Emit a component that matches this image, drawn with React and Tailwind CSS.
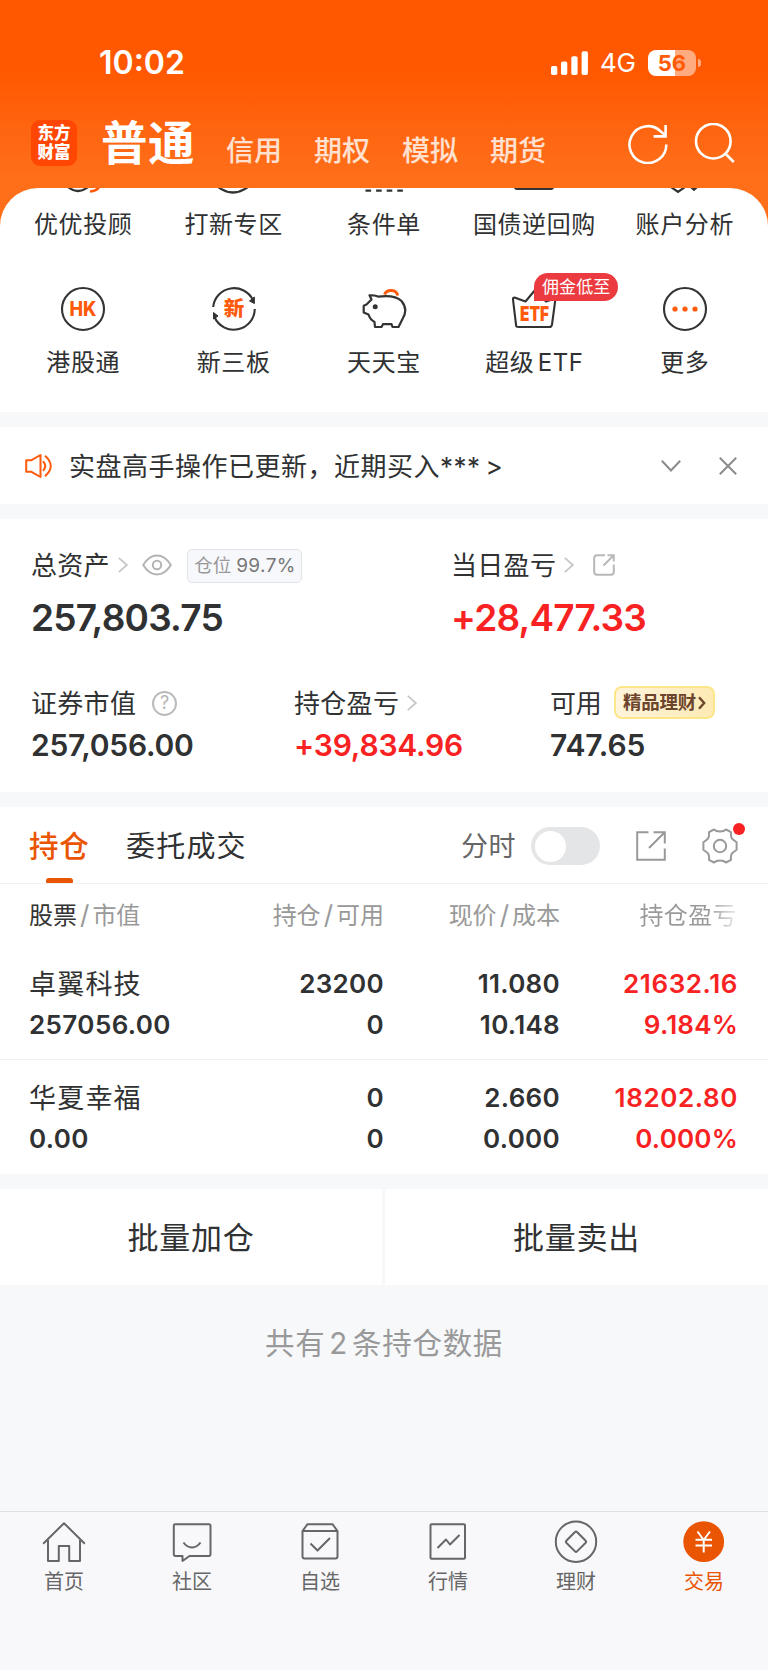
const shortcutsTop = ["优优投顾", "打新专区", "条件单", "国债逆回购", "账户分析"];

const holdings = [
  {
    name: "卓翼科技",
    value: "257056.00",
    amount: "23200",
    available: "0",
    price: "11.080",
    cost: "10.148",
    profit: "21632.16",
    percent: "9.184%",
  },
  {
    name: "华夏幸福",
    value: "0.00",
    amount: "0",
    available: "0",
    price: "2.660",
    cost: "0.000",
    profit: "18202.80",
    percent: "0.000%",
  },
];

const StatusBar = () => (
  <div className="flex h-[38px] items-center pl-[99px]">
    <span className="w-[452px] text-[32px] leading-[38px] font-semibold">10:02</span>
    <svg width="38" height="24" viewBox="0 0 38 24" fill="#fff">
      <rect x="0" y="15" width="6.3" height="9" rx="1.8" />
      <rect x="10" y="10.6" width="6.3" height="13.4" rx="1.8" />
      <rect x="20.3" y="5.3" width="6.3" height="18.7" rx="1.8" />
      <rect x="30.6" y="0.3" width="6.3" height="23.7" rx="1.8" />
    </svg>
    <span className="ml-[11px] w-[48px] pt-[1px] text-[26px] leading-[38px] tracking-[-0.2px]">4G</span>
    <div className="flex h-[26px] w-[48px] items-center justify-center rounded-[8px] bg-linear-to-r from-white from-56% to-white/50 to-56% text-[22px] leading-[26px] font-bold text-[#ff5a05]">
      56
    </div>
    <div className="ml-[2px] h-[8px] w-[3px] rounded-r-full bg-white/50" />
  </div>
);

const Header = () => (
  <header className="h-[240px] bg-linear-to-b from-[#ff5800] from-30% to-[#ff6f1a] to-75% pt-[43.5px] text-white">
    <StatusBar />
    <div className="flex pt-[38.5px] pl-[31px]">
      <div className="h-[46px] w-[46px] rounded-[9px] bg-[#ff4602] pt-[4px] text-center text-[16.5px] leading-[19.3px] font-black">
        <div>东方</div>
        <div>财富</div>
      </div>
      <h1 className="ml-[24px] w-[125px] text-[46.5px] leading-[46px] font-bold tracking-[0.5px]">普通</h1>
      <nav className="flex w-[402px] gap-[32px] pt-[8px] text-[28px] leading-[46px] font-medium text-white/80">
        <span>信用</span>
        <span>期权</span>
        <span>模拟</span>
        <span>期货</span>
      </nav>
      <svg width="40" height="40" viewBox="0 0 40 40" className="mt-[4px]" fill="none" stroke="#fff" strokeWidth="2.6">
        <path d="M38.3 20.5A18.4 18.4 0 1 1 32.5 7.2L37 11" />
        <path d="M37.6 1V12.4H25.6" />
      </svg>
      <svg width="42" height="42" viewBox="0 0 42 42" className="mt-[3px] ml-[26px]" fill="none" stroke="#fff" strokeWidth="2.6">
        <circle cx="19.3" cy="18.2" r="17.3" />
        <path d="M31.3 30.5L39.8 39" />
      </svg>
    </div>
  </header>
);

// lower edges of the row that is scrolled under the header
const CutIcons = () => (
  <svg width="768" height="8" viewBox="0 0 768 8" fill="none" stroke="#333" strokeWidth="2.2" className="block">
    <path d="M68 -1Q78 7 88 -1" />
    <path d="M90 3.5Q97 3 99 -1" stroke="#ff5a0a" strokeWidth="2.6" />
    <path d="M218 -1Q233 10 248 -1" />
    <path d="M365.5 2.6H403.5" strokeDasharray="5.6 5" strokeWidth="2.4" />
    <path d="M515 -1Q515 1 518 1H550Q553 1 553 -1" />
    <path d="M671 -1L678 4L685 -1M691 -1L694 1.8L697 -1" />
  </svg>
);

const HkIcon = () => (
  <svg width="46" height="46" viewBox="0 0 46 46" fill="none" stroke="#333" strokeWidth="2.1">
    <circle cx="23" cy="23" r="21" />
    <text x="23" y="29.8" textAnchor="middle" fill="#ff5a0a" stroke="none" fontSize="19.5" fontWeight="800" letterSpacing="0" textLength="27" lengthAdjust="spacingAndGlyphs">HK</text>
  </svg>
);

const XinIcon = () => (
  <svg width="46" height="46" viewBox="0 0 46 46" fill="none" stroke="#333" strokeWidth="2.1">
    <path d="M2.2 21A21 21 0 0 1 42 14" />
    <path d="M43.8 23A21 21 0 0 1 3.5 31" />
    <path d="M43.4 11V17.5L38.5 15Z" fill="#333" strokeWidth="1" />
    <path d="M2.5 33V26.5L7 30Z" fill="#333" strokeWidth="1" />
    <text x="23" y="30" textAnchor="middle" fill="#ff5a0a" stroke="none" fontSize="20.5" fontWeight="800" letterSpacing="0">新</text>
  </svg>
);

const PigIcon = () => (
  <svg width="46" height="46" viewBox="0 0 46 46" fill="none" stroke="#333" strokeWidth="2.2" strokeLinejoin="round">
    <path d="M23.5 8.5A7 6.5 0 0 1 36.8 9.5" stroke="#ff5a0a" strokeWidth="3" />
    <path d="M8.5 9.3Q13 9 17 10.6Q34 8.5 40.5 15Q47.5 23.5 41.5 33L37.5 41H31.5L30.5 38.2H22L20.5 41H14L13.5 36Q9 33.5 7.5 28.5L2.7 26.5V19.8L5.5 18.5L10.5 13.5Z" />
    <circle cx="14.2" cy="20.7" r="2.5" fill="#333" stroke="none" />
  </svg>
);

const EtfIcon = () => (
  <svg width="46" height="46" viewBox="0 0 46 46" fill="none" stroke="#333" strokeWidth="2.1" strokeLinejoin="round">
    <path d="M5.5 40.5Q6 41 8 41H38.5Q40.5 41 41 38.5L44.5 12.5L35 15.5L24.5 3.5L14.5 15.5L3.5 11.5Q1.8 11.5 2 13.5L5 38.5Q5 40 5.5 40.5Z" />
    <text x="23.5" y="34.5" textAnchor="middle" fill="#ff5a0a" stroke="none" fontSize="20.5" fontWeight="900" letterSpacing="0" textLength="29" lengthAdjust="spacingAndGlyphs">ETF</text>
  </svg>
);

const MoreIcon = () => (
  <svg width="46" height="46" viewBox="0 0 46 46" fill="none" stroke="#333" strokeWidth="2.1">
    <circle cx="23" cy="23" r="21" />
    <g fill="#ff5a0a" stroke="none">
      <circle cx="13" cy="23" r="2.6" />
      <circle cx="23" cy="23" r="2.6" />
      <circle cx="33" cy="23" r="2.6" />
    </g>
  </svg>
);

const shortcuts = [
  { label: "港股通", Icon: HkIcon },
  { label: "新三板", Icon: XinIcon },
  { label: "天天宝", Icon: PigIcon },
  { label: "超级 ETF", Icon: EtfIcon, badge: "佣金低至" },
  { label: "更多", Icon: MoreIcon },
];

const Shortcuts = () => (
  <section className="relative -mt-[52px] h-[224px] overflow-hidden rounded-t-[38px] bg-white text-[24px] leading-[34px] tracking-[0.6px]">
    <CutIcons />
    <div className="grid grid-cols-5 px-[8px] pt-[12px] text-center">
      {shortcutsTop.map((label) => (
        <div key={label} className="whitespace-nowrap">{label}</div>
      ))}
    </div>
    <div className="grid grid-cols-5 px-[8px] pt-[44px] text-center">
      {shortcuts.map(({ label, Icon, badge }) => (
        <div key={label} className="relative flex flex-col items-center">
          <Icon />
          {badge && (
            <span className="absolute -top-[13px] left-[75px] h-[28px] w-[84px] rounded-[14px] rounded-bl-none bg-[#ec3b40] text-[17px] leading-[28px] tracking-[0.1px] text-white">
              {badge}
            </span>
          )}
          <span className="mt-[14px] whitespace-nowrap [word-spacing:-4px]">{label}</span>
        </div>
      ))}
    </div>
  </section>
);

const Notice = () => (
  <section className="mt-[15px] flex h-[77px] items-center bg-white pl-[25px]">
    <svg width="28" height="26" viewBox="0 0 28 26" fill="none" stroke="#ff5a0a" strokeWidth="2">
      <path d="M1.2 7.2H6.5L15.5 2V24L6.5 18.8H1.2Z" strokeLinejoin="round" />
      <path d="M18 8.2Q22.5 13 18 17.8M20 2.8Q31.5 13 20 23.2" />
    </svg>
    <span className="ml-[16px] w-[592px] pt-[2px] text-[26px] leading-[38px] tracking-[0.5px] whitespace-pre [word-spacing:-3px]">实盘高手操作已更新，近期买入*** &gt;</span>
    <svg width="20" height="14" viewBox="0 0 20 14" fill="none" stroke="#8c8c8c" strokeWidth="2">
      <path d="M0.8 1.8L10 11.5L19.2 1.8" />
    </svg>
    <svg width="18" height="18" viewBox="0 0 18 18" className="ml-[38px]" fill="none" stroke="#8c8c8c" strokeWidth="2">
      <path d="M0.8 0.8L17.2 17.2M17.2 0.8L0.8 17.2" />
    </svg>
  </section>
);

const Chevron = () => (
  <svg width="10" height="16" viewBox="0 0 10 16" fill="none" stroke="#c8c8c8" strokeWidth="1.8">
    <path d="M0.8 0.8L8.8 8L0.8 15.2" />
  </svg>
);

const Assets = () => (
  <section className="mt-[15px] h-[273px] bg-white pt-[27px] text-[26px] tracking-[0.3px]">
    <div className="flex pl-[31px]">
      <div className="w-[420px]">
        <div className="flex h-[38px] items-center">
          <span className="w-[87px]">总资产</span>
          <Chevron />
          <svg width="30" height="22" viewBox="0 0 30 22" className="ml-[14px]" fill="none" stroke="#b4b4b4" strokeWidth="2">
            <path d="M1.2 11Q7 1.5 15 1.5T28.8 11Q23 20.5 15 20.5T1.2 11Z" />
            <circle cx="15" cy="11" r="4.2" />
          </svg>
          <span className="mt-[1px] ml-[15px] flex h-[34px] w-[115px] items-center justify-center rounded-[5px] border border-[#e2e3e6] bg-[#f7f8fb] pt-[1px] pl-[1px] text-[18.5px] tracking-normal text-[#999]">
            仓位<span className="ml-[5px] text-[19px] tracking-[0.4px] text-[#777]">99.7%</span>
          </span>
        </div>
        <div className="mt-[12px] text-[37px] leading-[44px] font-semibold tracking-[-0.8px]">257,803.75</div>
      </div>
      <div>
        <div className="flex h-[38px] items-center">
          <span className="w-[113px]">当日盈亏</span>
          <Chevron />
          <svg width="22" height="22" viewBox="0 0 22 22" className="ml-[19px]" fill="none" stroke="#b8b8b8" strokeWidth="2">
            <path d="M12 1.2H4Q1.2 1.2 1.2 4V18Q1.2 20.8 4 20.8H18Q20.8 20.8 20.8 18V10.5" />
            <path d="M14.5 1.2H20.8V7.5M20.5 1.5L10.5 11.5" />
          </svg>
        </div>
        <div className="mt-[12px] text-[37px] leading-[44px] font-semibold tracking-[-0.8px] text-[#f82222]">+28,477.33</div>
      </div>
    </div>
    <div className="mt-[44px] flex pl-[31px]">
      <div className="w-[263px]">
        <div className="flex h-[38px] items-center">
          <span className="w-[121px]">证券市值</span>
          <span className="flex h-[25px] w-[25px] items-center justify-center rounded-full border-2 border-[#bbb] text-[18px] leading-none tracking-normal text-[#b4b4b4]">?</span>
        </div>
        <div className="mt-[5px] text-[30px] leading-[36px] font-semibold tracking-[-0.25px]">257,056.00</div>
      </div>
      <div className="w-[256px]">
        <div className="flex h-[38px] items-center">
          <span className="w-[113px]">持仓盈亏</span>
          <Chevron />
        </div>
        <div className="mt-[5px] text-[30px] leading-[36px] font-semibold tracking-[-0.2px] text-[#f82222]">+39,834.96</div>
      </div>
      <div>
        <div className="flex h-[38px] items-center">
          <span className="w-[64px] tracking-[-0.3px]">可用</span>
          <span className="-mt-[1px] flex h-[33px] w-[101px] items-center justify-center rounded-[8px] border-2 border-[#fde68a] bg-linear-to-r from-[#fff4dc] to-[#fdeab4] text-[18.5px] font-bold tracking-[-0.3px] text-[#6d452c]">
            精品理财
            <svg width="8" height="14" viewBox="0 0 8 14" className="ml-[2px]" fill="none" stroke="#6d452c" strokeWidth="2.4">
              <path d="M1 1.2L6.2 7L1 12.8" />
            </svg>
          </span>
        </div>
        <div className="mt-[5px] text-[30px] leading-[36px] font-semibold tracking-[-0.1px]">747.65</div>
      </div>
    </div>
  </section>
);

const HoldingTabs = () => (
  <div className="flex h-[77px] items-center border-b border-[#f0f1f3] pt-[2px] pl-[29px]">
    <div className="relative flex h-full w-[97px] items-center text-[29.5px] font-medium tracking-[0.8px] text-[#ea5504]">
      持仓
      <span className="absolute bottom-0 left-[17px] h-[5px] w-[27px] rounded-t-[3px] rounded-b-[1px] bg-[#ea5504]" />
    </div>
    <span className="w-[335px] pt-[2px] text-[29px] tracking-[1.2px]">委托成交</span>
    <span className="w-[70px] pt-[2px] text-[27px] tracking-[0.4px] text-[#666]">分时</span>
    <div className="flex h-[38px] w-[69px] items-center rounded-full bg-[#e4e5e7] pl-[4px]">
      <div className="h-[31px] w-[31px] rounded-full bg-white" />
    </div>
    <svg width="30" height="30" viewBox="0 0 30 30" className="ml-[36px]" fill="none" stroke="#999" strokeWidth="2">
      <path d="M12.5 1.2H1.2V28.8H28.8V17.5" />
      <path d="M17.5 1.2H28.8V12.5M28.5 1.5L13 17" />
    </svg>
    <div className="relative ml-[36px]">
      <svg width="36" height="36" viewBox="0 0 36 36" fill="none" stroke="#999" strokeWidth="2" strokeLinejoin="round">
        <path d="M12 1.5Q14 3.6 18 3.6T24 1.5L29 4.2Q28.6 9 30 10.5T34.6 14.3V21.7Q31.4 24 30 25.5T29 31.8L24 34.5Q22 32.4 18 32.4T12 34.5L7 31.8Q7.4 27 6 25.5T1.4 21.7V14.3Q4.6 12 6 10.5T7 4.2Z" />
        <circle cx="18" cy="18" r="6.2" />
      </svg>
      <span className="absolute -top-[5px] right-[-7px] h-[12px] w-[12px] rounded-full bg-[#f82222]" />
    </div>
  </div>
);

const Slash = () => <span className="mx-[3px] text-[26px] leading-none">/</span>;

const HoldingTable = () => (
  <section className="mt-[15px] bg-white">
    <HoldingTabs />
    <div className="grid h-[62px] grid-cols-[178px_177px_176px_177px] items-center pt-[1px] pl-[29px] text-right text-[24px] text-[#999]">
      <div className="text-left whitespace-nowrap">
        <span className="text-[#333]">股票</span><Slash />市值
      </div>
      <div>持仓<Slash />可用</div>
      <div>现价<Slash />成本</div>
      <div>
        <span className="bg-linear-to-r from-[#999] from-70% to-[#999]/20 bg-clip-text tracking-[0.4px] text-transparent">持仓盈亏</span>
      </div>
    </div>
    {holdings.map((row, i) => (
      <div
        key={row.name}
        className={`grid h-[114px] grid-cols-[178px_177px_176px_178px] pt-[17px] pl-[29px] text-right text-[26px] leading-[41.4px] font-semibold tracking-[0.3px] ${i === 0 ? "border-b border-[#f0f1f3]" : ""}`}
      >
        <div className="text-left">
          <div className="relative top-[1px] text-[27px] font-normal tracking-[1.2px]">{row.name}</div>
          <div className="tracking-[0.4px]">{row.value}</div>
        </div>
        <div>
          <div>{row.amount}</div>
          <div>{row.available}</div>
        </div>
        <div>
          <div>{row.price}</div>
          <div>{row.cost}</div>
        </div>
        <div className="tracking-[0.6px] text-[#f82222]">
          <div>{row.profit}</div>
          <div className="tracking-[0.2px]">{row.percent}</div>
        </div>
      </div>
    ))}
  </section>
);

const tabs = [
  {
    label: "首页",
    icon: (
      <>
        <path d="M1.2 22.8L22 2.2L42.8 22.8" />
        <path d="M6 19V40H16.8V25H27.2V40H38V19" />
      </>
    ),
  },
  {
    label: "社区",
    icon: (
      <>
        <path d="M5 3.2H39Q40.5 3.2 40.5 5V33Q40.5 35 39 35H19.5L12.5 40V35H5.5Q3.8 35 3.8 33V5Q3.8 3.2 5 3.2Z" />
        <path d="M13.5 21.5Q17 26.5 22 26.5T30.5 21.5" />
      </>
    ),
  },
  {
    label: "自选",
    icon: (
      <>
        <path d="M4.5 10L9.5 3.2H34.5L39.5 10V35.5Q39.5 37.5 37.5 37.5H6.5Q4.5 37.5 4.5 35.5ZM4.5 10H39.5" />
        <path d="M12.5 22.5L19.5 29.5L32 17" />
      </>
    ),
  },
  {
    label: "行情",
    icon: (
      <>
        <rect x="4.5" y="3.2" width="34.5" height="34.5" rx="1" />
        <path d="M11.5 27L20 18.5L24 23.5L33.5 14" />
      </>
    ),
  },
  {
    label: "理财",
    icon: (
      <>
        <circle cx="22" cy="20.7" r="20.2" />
        <path d="M21 11L12.3 19.7Q11.3 20.7 12.3 21.7L21 30.4Q22 31.4 23 30.4L31.7 21.7Q32.7 20.7 31.7 19.7L23 11Q22 10 21 11Z" />
      </>
    ),
  },
  {
    label: "交易",
    active: true,
    icon: (
      <>
        <circle cx="21.7" cy="20.7" r="20.4" fill="#ea5504" stroke="none" />
        <path d="M15.5 10.5L21.7 19L28 10.5M21.7 19V31.5M13.5 18.8H30M13.5 24.5H30" stroke="#fff" />
      </>
    ),
  },
];

const TabBar = () => (
  <footer className="mt-auto grid h-[159px] grid-cols-6 border-t border-[#dfe0e2] bg-[#f8f8fb] pt-[9px]">
    {tabs.map(({ label, icon, active }) => (
      <div
        key={label}
        className={`flex flex-col items-center text-[20px] leading-[30px] ${active ? "text-[#ea5504]" : "text-[#666]"}`}
      >
        <svg width="44" height="42" viewBox="0 0 44 42" fill="none" stroke="#666" strokeWidth="2" strokeLinejoin="round" className="overflow-visible">
          {icon}
        </svg>
        <span className="mt-[4px]">{label}</span>
      </div>
    ))}
  </footer>
);

export default function App() {
  return (
    <div className="flex h-[1670px] w-[768px] flex-col overflow-hidden bg-[#f7f8fa] font-['Inter','Noto_Sans_CJK_SC',sans-serif] text-[#303132]">
      <Header />
      <Shortcuts />
      <Notice />
      <Assets />
      <HoldingTable />
      <div className="mt-[15px] grid h-[96px] grid-cols-[382px_383px] gap-[3px] overflow-hidden text-center text-[31px] leading-[98px] tracking-[0.8px]">
        <div className="bg-white">批量加仓</div>
        <div className="bg-white">批量卖出</div>
      </div>
      <p className="mt-[37px] text-center text-[29.5px] leading-[42px] tracking-[0.7px] text-[#999] [word-spacing:-5px]">共有 2 条持仓数据</p>
      <TabBar />
    </div>
  );
}
